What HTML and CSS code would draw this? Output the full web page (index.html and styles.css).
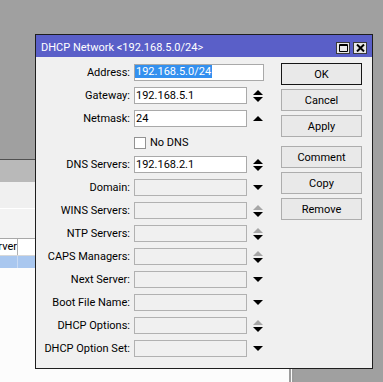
FILE: index.html
```html
<!DOCTYPE html>
<html lang="en">
<head>
  <meta charset="UTF-8" />
  <title>DHCP Network</title>
  <link rel="stylesheet" href="styles.css">
</head>
<body>
  <div class="desk">

    <!-- list window behind the dialog -->
    <div class="bgwin">
      <div class="bg-toolbar"></div>
      <div class="bg-pane"></div>
      <div class="bg-pane2"></div>
      <div class="bg-thead">
        <span class="bg-th first">Server</span>
        <span class="bg-th"></span>
      </div>
      <div class="bg-row selected">
        <span class="bg-td first"></span>
        <span class="bg-td"></span>
      </div>
    </div>

    <div class="dialog">
      <div class="titlebar">
        <span class="title">DHCP Network &lt;192.168.5.0/24&gt;</span>
        <span class="tb-btns">
          <span class="tb-btn">
            <svg width="9" height="8" viewBox="0 0 9 8"><path d="M0.5 0.5h8v7h-8z M0.5 1.5h8" fill="none" stroke="#000" stroke-width="1"/></svg>
          </span>
          <span class="tb-btn">
            <svg width="9" height="8" viewBox="0 0 9 8"><path d="M1 0.5l7 7M8 0.5l-7 7" stroke="#000" stroke-width="2"/></svg>
          </span>
        </span>
      </div>

      <div class="dialog-body">
        <div class="form">
          <label class="lbl">Address:</label>
          <div class="field wide"><span class="selected-text">192.168.5.0/24</span></div>

          <label class="lbl">Gateway:</label>
          <div class="field">192.168.5.1</div>
          <div class="spin">
            <svg width="10" height="12" viewBox="0 0 10 12"><path d="M0 5L5 0L10 5z"/><path d="M0 7h10l-5 5z"/></svg>
          </div>

          <label class="lbl">Netmask:</label>
          <div class="field">24</div>
          <div class="spin">
            <svg width="10" height="5" viewBox="0 0 10 5"><path d="M0 5L5 0L10 5z"/></svg>
          </div>

          <span class="lbl"></span>
          <div class="check-row">
            <span class="checkbox"></span>
            <span>No DNS</span>
          </div>

          <label class="lbl">DNS Servers:</label>
          <div class="field">192.168.2.1</div>
          <div class="spin">
            <svg width="10" height="12" viewBox="0 0 10 12"><path d="M0 5L5 0L10 5z"/><path d="M0 7h10l-5 5z"/></svg>
          </div>

          <label class="lbl">Domain:</label>
          <div class="field off"></div>
          <div class="spin">
            <svg width="10" height="5" viewBox="0 0 10 5"><path d="M0 0h10l-5 5z"/></svg>
          </div>

          <label class="lbl">WINS Servers:</label>
          <div class="field off"></div>
          <div class="spin">
            <svg width="10" height="12" viewBox="0 0 10 12"><path class="dim" d="M0 5L5 0L10 5z"/><path d="M0 7h10l-5 5z"/></svg>
          </div>

          <label class="lbl">NTP Servers:</label>
          <div class="field off"></div>
          <div class="spin">
            <svg width="10" height="12" viewBox="0 0 10 12"><path class="dim" d="M0 5L5 0L10 5z"/><path d="M0 7h10l-5 5z"/></svg>
          </div>

          <label class="lbl">CAPS Managers:</label>
          <div class="field off"></div>
          <div class="spin">
            <svg width="10" height="12" viewBox="0 0 10 12"><path class="dim" d="M0 5L5 0L10 5z"/><path d="M0 7h10l-5 5z"/></svg>
          </div>

          <label class="lbl">Next Server:</label>
          <div class="field off"></div>
          <div class="spin">
            <svg width="10" height="5" viewBox="0 0 10 5"><path d="M0 0h10l-5 5z"/></svg>
          </div>

          <label class="lbl">Boot File Name:</label>
          <div class="field off"></div>
          <div class="spin">
            <svg width="10" height="5" viewBox="0 0 10 5"><path d="M0 0h10l-5 5z"/></svg>
          </div>

          <label class="lbl">DHCP Options:</label>
          <div class="field off"></div>
          <div class="spin">
            <svg width="10" height="12" viewBox="0 0 10 12"><path class="dim" d="M0 5L5 0L10 5z"/><path d="M0 7h10l-5 5z"/></svg>
          </div>

          <label class="lbl">DHCP Option Set:</label>
          <div class="field off"></div>
          <div class="spin">
            <svg width="10" height="5" viewBox="0 0 10 5"><path d="M0 0h10l-5 5z"/></svg>
          </div>
        </div>

        <div class="actions">
          <button class="btn default">OK</button>
          <button class="btn">Cancel</button>
          <button class="btn">Apply</button>
          <button class="btn spaced">Comment</button>
          <button class="btn">Copy</button>
          <button class="btn">Remove</button>
        </div>
      </div>
    </div>

  </div>
</body>
</html>
```

FILE: styles.css
```css
* { box-sizing: border-box; }

body {
  margin: 0;
  background: #a0a0a0;
  font-family: Roboto, "Liberation Sans", sans-serif;
  font-size: 11px;
  color: #000;
}

.desk {
  position: relative;
  width: 383px;
  height: 382px;
  overflow: hidden;
}

/* ---- window in the background ---- */

.bgwin {
  position: absolute;
  left: -60px;
  top: 159px;
  width: 354px;
  height: 240px;
  background: #fcfcfc;
  border-top: 1px solid #505050;
  border-right: 5px double #9c9c9c;
}

.bg-toolbar {
  height: 22px;
  background: #b9b9b9;
}

.bg-pane {
  height: 27px;
  background: #f0f0f0;
  border-bottom: 1px solid #fff;
}

.bg-pane2 {
  height: 29px;
  background: #f3f3f3;
}

.bg-thead {
  display: flex;
  height: 18px;
  background: #fff;
  border-top: 1px solid #a8a8a8;
  border-bottom: 1px solid #d8d8d8;
}

.bg-th,
.bg-td {
  width: 40px;
  border-right: 1px solid #b0b0b0;
}

.bg-th.first {
  width: 78px;
  padding-right: 0;
  text-align: right;
  line-height: 16px;
  white-space: nowrap;
  overflow: hidden;
}

.bg-row {
  display: flex;
  height: 12px;
}

.bg-row.selected {
  background: #a9c7ef;
}

.bg-row .bg-td { border-right-color: #c8daf3; }
.bg-td.first { width: 78px; }

/* ---- dialog ---- */

.dialog {
  position: absolute;
  left: 35px;
  top: 34px;
  width: 338px;
  height: 335px;
  background: #f0f0f0;
  border: 1px solid #1e1e1e;
}

.titlebar {
  display: flex;
  align-items: center;
  justify-content: space-between;
  height: 22px;
  padding: 3px 5px 0 5px;
  background: #5a5fc8;
  color: #fff;
}

.title {
  font-size: 11px;
  white-space: nowrap;
}

.tb-btns {
  display: flex;
  gap: 3px;
}

.tb-btn {
  display: flex;
  align-items: center;
  justify-content: center;
  width: 14px;
  height: 12px;
  background: #e8e8e8;
  border: 1px solid #3a3a3a;
}

.dialog-body {
  display: flex;
  align-items: flex-start;
  padding: 6px 10px 0 0;
}

.form {
  display: grid;
  grid-template-columns: 98px 113px 17px;
  grid-auto-rows: 17px;
  row-gap: 6px;
  margin-top: 1px;
}

.lbl {
  text-align: right;
  padding-right: 4px;
  line-height: 17px;
  white-space: nowrap;
}

.field {
  height: 17px;
  padding-left: 1px;
  line-height: 15px;
  background: #fff;
  border: 1px solid #a9a9a9;
  white-space: nowrap;
  overflow: hidden;
}

.field.wide { grid-column: span 2; }

.field.off {
  background: #f0f0f0;
  border-color: #b1b1b1;
}

.selected-text {
  display: inline-block;
  margin-left: -1px;
  padding: 0 1px;
  line-height: 13px;
  vertical-align: 1px;
  background: #3390ef;
  color: #fff;
}

.spin {
  display: flex;
  align-items: center;
  padding-left: 6px;
}

.spin svg { display: block; fill: #000; }
.spin .dim { fill: #a6a6a6; }

.check-row {
  grid-column: span 2;
  display: flex;
  align-items: center;
  gap: 4px;
  padding-top: 2px;
}

.checkbox {
  width: 12px;
  height: 12px;
  background: #fff;
  border: 1px solid #929292;
}

.actions {
  display: flex;
  flex-direction: column;
  gap: 4px;
  width: 81px;
  margin-left: 17px;
}

.btn {
  height: 22px;
  padding: 0;
  font-family: inherit;
  font-size: 11px;
  color: #000;
  background: #e9e9e9;
  border: 1px solid #adadad;
  border-radius: 0;
}

.btn.default { border-color: #161616; }
.btn.spaced { margin-top: 5px; }
```
